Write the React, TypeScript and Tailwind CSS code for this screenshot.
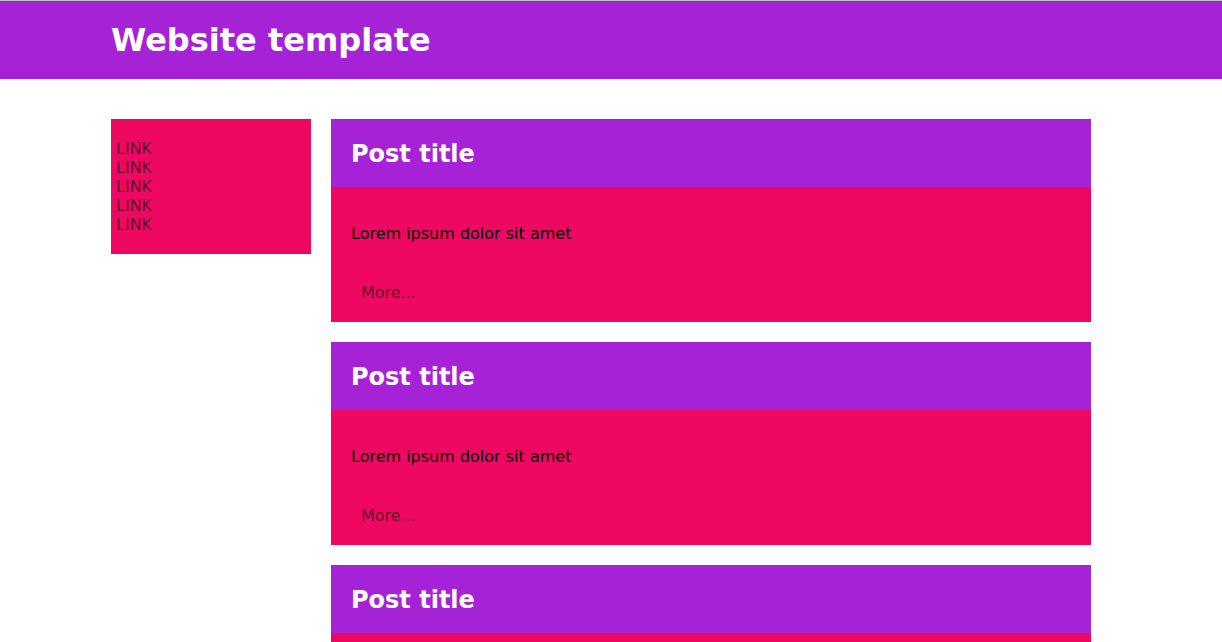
import React from 'react'

const links = ['LINK', 'LINK', 'LINK', 'LINK', 'LINK']
const posts = [1, 2, 3]

const PostCard = () => (
  <article className="flex flex-col">
    <div className="bg-[#a622d6] px-5 pt-5 pb-[18px]">
      <h2 className="text-2xl font-bold text-white leading-[30px]">Post title</h2>
    </div>
    <div className="bg-[#ee0862] px-5 pt-[37px] pb-5 leading-[19px]">
      <p className="text-base text-black leading-[19px]">Lorem ipsum dolor sit amet</p>
      <div className="mt-[40px] pl-[10px] leading-[19px]">
        <a href="#" className="text-base leading-[19px] text-black/60">
          More...
        </a>
      </div>
    </div>
  </article>
)

const App = () => {
  return (
    <div className="min-h-screen bg-white font-['DejaVu_Sans',sans-serif] border-t border-[#c0c0c0]">
      <header className="bg-[#a622d6] h-[78px] flex items-center">
        <div className="w-[980px] ml-[111px]">
          <h1 className="text-[32px] font-bold text-white leading-[37px]">Website template</h1>
        </div>
      </header>
      <div className="w-[980px] ml-[111px] pt-10 flex items-start gap-5">
        <nav className="w-[200px] shrink-0 bg-[#ee0862] py-5 px-[5px] flex flex-col">
          {links.map((l, i) => (
            <a key={i} href="#" className="text-base leading-[19px] text-black/60">
              {l}
            </a>
          ))}
        </nav>
        <main className="flex-1 flex flex-col gap-5">
          {posts.map(p => (
            <PostCard key={p} />
          ))}
        </main>
      </div>
    </div>
  )
}

export default App
